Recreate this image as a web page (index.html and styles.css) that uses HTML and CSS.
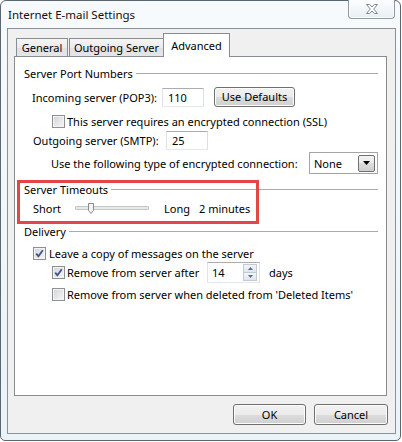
FILE: index.html
```html
<!DOCTYPE html>
<html lang="en">

<head>
    <meta charset="UTF-8">
    <title>Internet E-mail Settings</title>
    <link rel="stylesheet" href="styles.css">
</head>

<body>
    <div class="window">
        <div class="titlebar">
            <span class="title">Internet E-mail Settings</span>
            <span class="close">
                <svg width="12" height="10" viewBox="0 0 12 10">
                    <polygon points="0.5,0.5 3.6,0.5 6,3 8.4,0.5 11.5,0.5 7.7,5 11.5,9.5 8.4,9.5 6,7 3.6,9.5 0.5,9.5 4.3,5"
                        fill="#fff" stroke="#7b858e" stroke-width="1" />
                </svg>
            </span>
        </div>
        <div class="client">
            <div class="tabs">
                <div class="tab tab-general">General</div>
                <div class="tab tab-outgoing">Outgoing Server</div>
                <div class="tab tab-active">Advanced</div>
            </div>
            <div class="panel">
                <div class="group-head"><span>Server Port Numbers</span><i class="rule"></i></div>
                <div class="row row-incoming">
                    <span class="lbl lbl-in">Incoming server (POP3):</span>
                    <span class="field field-port">110</span>
                    <span class="btn btn-defaults">Use Defaults</span>
                </div>
                <div class="row row-ssl">
                    <span class="check"></span>
                    <span>This server requires an encrypted connection (SSL)</span>
                </div>
                <div class="row row-outgoing">
                    <span class="lbl lbl-out">Outgoing server (SMTP):</span>
                    <span class="field field-port">25</span>
                </div>
                <div class="row row-enc">
                    <span class="lbl lbl-enc">Use the following type of encrypted connection:</span>
                    <span class="select">
                        <span class="select-value">None</span>
                        <span class="select-arrow">
                            <svg width="7" height="4" viewBox="0 0 7 4"><polygon points="0,0 7,0 3.5,4" fill="#000" /></svg>
                        </span>
                    </span>
                </div>

                <div class="group-head group-gap"><span>Server Timeouts</span><i class="rule"></i></div>
                <div class="row row-slider">
                    <span class="lbl lbl-short">Short</span>
                    <span class="slider">
                        <span class="track"></span>
                        <svg class="thumb" width="6" height="11" viewBox="0 0 6 11">
                            <polygon points="0.5,0.5 5.5,0.5 5.5,7.5 3,10.5 0.5,7.5" fill="#f4f4f4" stroke="#8a8a8a" />
                        </svg>
                    </span>
                    <span class="lbl lbl-long">Long</span>
                    <span>2 minutes</span>
                </div>

                <div class="group-head group-gap"><span>Delivery</span><i class="rule"></i></div>
                <div class="row row-leave">
                    <span class="check checked">
                        <svg width="11" height="11" viewBox="0 0 11 11"><path d="M2.2 5.6 L4.4 8.2 L8.8 2.2" fill="none" stroke="#42558a" stroke-width="1.8" /></svg>
                    </span>
                    <span>Leave a copy of messages on the server</span>
                </div>
                <div class="row row-remove">
                    <span class="check checked">
                        <svg width="11" height="11" viewBox="0 0 11 11"><path d="M2.2 5.6 L4.4 8.2 L8.8 2.2" fill="none" stroke="#42558a" stroke-width="1.8" /></svg>
                    </span>
                    <span class="lbl lbl-remove">Remove from server after</span>
                    <span class="spin">
                        <span class="spin-value">14</span>
                        <span class="spin-buttons">
                            <span class="spin-btn"><svg width="5" height="3" viewBox="0 0 5 3"><polygon points="0,3 5,3 2.5,0" fill="#5a6d85" /></svg></span>
                            <span class="spin-btn"><svg width="5" height="3" viewBox="0 0 5 3"><polygon points="0,0 5,0 2.5,3" fill="#5a6d85" /></svg></span>
                        </span>
                    </span>
                    <span class="days">days</span>
                </div>
                <div class="row row-deleted">
                    <span class="check"></span>
                    <span>Remove from server when deleted from 'Deleted Items'</span>
                </div>

                <div class="highlight"></div>
            </div>
            <div class="actions">
                <span class="btn btn-ok">OK</span>
                <span class="btn btn-cancel">Cancel</span>
            </div>
        </div>
    </div>
</body>

</html>
```

FILE: styles.css
```css
body {
    margin: 0;
    font-family: "Noto Sans", sans-serif;
    font-size: 11px;
    color: #000;
    background: #fff;
}

.window {
    width: 401px;
    height: 441px;
    box-sizing: border-box;
    border: 1px solid #5b6770;
    border-radius: 6px 6px 5px 5px;
    padding: 0 4px 6px 6px;
    background: linear-gradient(#f7fafc, #eaf3f8);
    display: flex;
    flex-direction: column;
}

.titlebar {
    height: 27px;
    display: flex;
    align-items: flex-start;
}

.title {
    margin: 6px 0 0 1px;
    line-height: 15px;
    font-size: 11.5px;
    color: #111;
}

.close {
    box-sizing: border-box;
    width: 47px;
    height: 19px;
    margin: -1px 1px 0 auto;
    border: 1px solid #8e9aa6;
    border-top: none;
    border-radius: 0 0 4px 4px;
    background: linear-gradient(#fdfeff, #e8eff4);
    box-shadow: inset 0 0 0 1px #fafcfd;
    display: flex;
    align-items: center;
    justify-content: center;
}

.client {
    flex: 1;
    border: 1px solid #8a9299;
    background: #f0f0f0;
    display: flex;
    flex-direction: column;
}

/* tab strip */

.tabs {
    display: flex;
    align-items: flex-end;
    height: 23px;
    margin-top: 4px;
    padding-left: 8px;
    position: relative;
    z-index: 1;
}

.tab {
    box-sizing: border-box;
    height: 18px;
    padding-top: 1px;
    border: 1px solid #898c95;
    border-bottom: none;
    background: linear-gradient(#f5f5f5, #ebebeb 50%, #e0e0e0 50%, #e6e6e6);
    text-align: center;
    line-height: 15px;
}

.tab-general {
    width: 52px;
}

.tab-outgoing {
    width: 95px;
    margin-left: 1px;
}

.tab-active {
    width: 67px;
    height: 24px;
    margin-left: -1px;
    margin-bottom: -1px;
    padding-top: 4px;
    background: #fff;
}

.panel {
    box-sizing: border-box;
    width: 373px;
    height: 340px;
    margin-left: 6px;
    padding: 9px 8px 0 9px;
    border: 1px solid #898c95;
    background: #fff;
    position: relative;
}

.group-head {
    display: flex;
    align-items: center;
    height: 15px;
    line-height: 15px;
}

.group-gap {
    margin-top: 8px;
}

.rule {
    flex: 1;
    height: 1px;
    margin-left: 3px;
    background: #a8abae;
}

.row {
    display: flex;
    align-items: center;
    white-space: nowrap;
}

.lbl {
    flex: none;
}

.row-incoming {
    height: 20px;
    margin-top: 6px;
    padding-left: 8px;
}

.lbl-in {
    width: 130px;
}

.row-ssl {
    height: 15px;
    margin-top: 7px;
    padding-left: 28px;
}

.row-outgoing {
    height: 19px;
    margin-top: 2px;
    padding-left: 9px;
}

.lbl-out {
    width: 133px;
}

.row-enc {
    height: 22px;
    margin-top: 2px;
    padding-left: 27px;
}

.lbl-enc {
    width: 258px;
}

.row-slider {
    height: 16px;
    margin-top: 3px;
    padding-left: 9px;
}

.lbl-short {
    width: 42px;
}

.lbl-long {
    width: 35px;
    margin-left: 15px;
}

.row-leave {
    height: 15px;
    margin-top: 7px;
    padding-left: 9px;
}

.row-leave .check {
    margin-right: 3px;
}

.row-remove {
    height: 21px;
    margin-top: 1px;
    padding-left: 28px;
}

.lbl-remove {
    width: 140px;
}

.days {
    margin-left: 9px;
}

.row-deleted {
    height: 15px;
    margin-top: 4px;
    padding-left: 28px;
}

/* controls */

.field {
    box-sizing: border-box;
    height: 19px;
    padding-left: 5px;
    border: 1px solid;
    border-color: #abadb3 #dbdfe6 #e3e9ef #e2e3ea;
    background: #fff;
    line-height: 17px;
}

.field-port {
    width: 42px;
}

.btn {
    box-sizing: border-box;
    border: 1px solid #707070;
    border-radius: 3px;
    background: linear-gradient(#f2f2f2, #ebebeb 50%, #dddddd 50%, #cfcfcf);
    box-shadow: inset 0 0 0 1px #fcfcfc;
    text-align: center;
}

.btn-defaults {
    width: 81px;
    height: 20px;
    margin-left: 10px;
    line-height: 18px;
}

.check {
    box-sizing: border-box;
    flex: none;
    width: 13px;
    height: 13px;
    margin-right: 2px;
    border: 1px solid #8e8f8f;
    background: linear-gradient(135deg, #d0d3d7, #f8f8f8);
    box-shadow: inset 0 0 0 1px #f4f4f4;
}

.check svg {
    display: block;
}

.select {
    box-sizing: border-box;
    width: 70px;
    height: 22px;
    padding: 0 2px 0 4px;
    border: 1px solid #a5a5a5;
    background: #fff;
    display: flex;
    align-items: center;
}

.select-value {
    flex: 1;
}

.select-arrow {
    box-sizing: border-box;
    width: 17px;
    height: 17px;
    border: 1px solid #707070;
    border-radius: 2px;
    background: linear-gradient(#f2f2f2, #ebebeb 50%, #dddddd 50%, #cfcfcf);
    display: flex;
    align-items: center;
    justify-content: center;
}

.slider {
    width: 74px;
    height: 16px;
    position: relative;
    display: flex;
    align-items: center;
}

.track {
    flex: 1;
    height: 2px;
    border: 1px solid #c6c6c6;
    border-radius: 1px;
    background: #e7eaea;
}

.thumb {
    position: absolute;
    left: 13px;
    top: 3px;
}

.spin {
    box-sizing: border-box;
    width: 53px;
    height: 21px;
    padding: 0 2px 0 4px;
    border: 1px solid;
    border-color: #abadb3 #dbdfe6 #e3e9ef #e2e3ea;
    background: #fff;
    display: flex;
    align-items: center;
}

.spin-value {
    flex: 1;
}

.spin-buttons {
    width: 14px;
    display: flex;
    flex-direction: column;
}

.spin-btn {
    box-sizing: border-box;
    height: 9px;
    border: 1px solid #c3cad2;
    background: linear-gradient(#f3f6f9, #dfe5ec);
    display: flex;
    align-items: center;
    justify-content: center;
}

.spin-btn + .spin-btn {
    margin-top: -1px;
}

.highlight {
    position: absolute;
    left: 2px;
    top: 123px;
    width: 242px;
    height: 44px;
    box-sizing: border-box;
    border: 3px solid #e24646;
}

.actions {
    display: flex;
    justify-content: flex-end;
    gap: 8px;
    margin-top: 8px;
    padding-right: 7px;
}

.btn-ok,
.btn-cancel {
    height: 21px;
    line-height: 19px;
}

.btn-ok {
    width: 73px;
}

.btn-cancel {
    width: 74px;
}
```
